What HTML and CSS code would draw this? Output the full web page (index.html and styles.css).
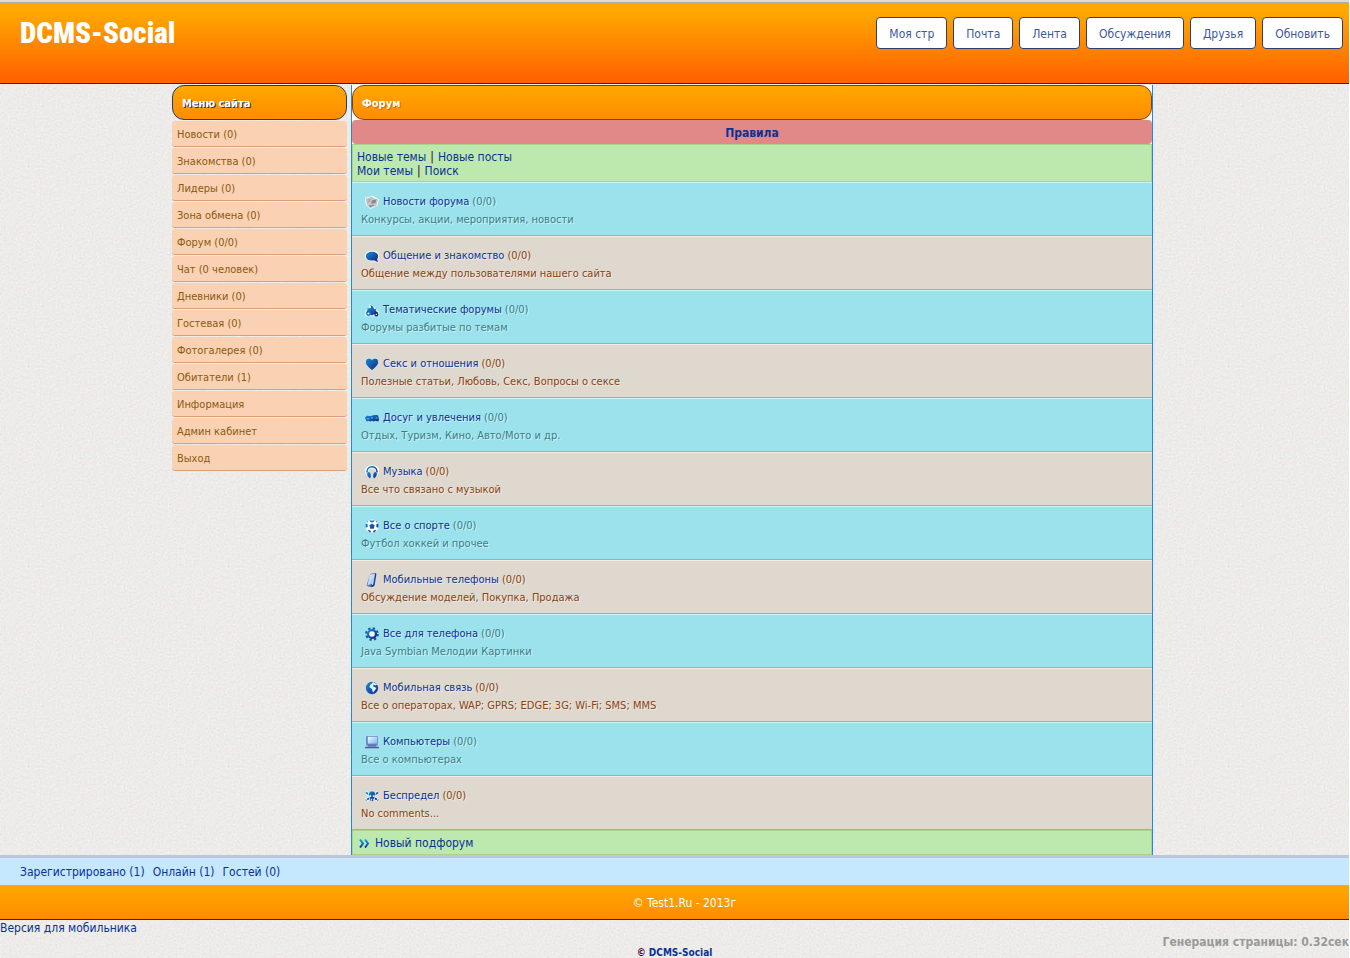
FILE: index.html
```html
<!DOCTYPE html>
<html lang="ru">
<head>
<meta charset="utf-8">
<title>DCMS-Social - Форум</title>
<link rel="stylesheet" href="styles.css">
</head>
<body>
<svg class="defs" width="0" height="0" aria-hidden="true">
  <defs>
    <linearGradient id="blue" x1="0" y1="0" x2="1" y2="1"><stop offset="0" stop-color="#1290dc"/><stop offset="1" stop-color="#16217c"/></linearGradient>
    <linearGradient id="glass" x1="0" y1="0" x2="1" y2="1"><stop offset="0" stop-color="#f2faff"/><stop offset="1" stop-color="#7db4e4"/></linearGradient>
    <linearGradient id="arrow" x1="0" y1="0" x2="0" y2="1"><stop offset="0" stop-color="#12a0e8"/><stop offset="1" stop-color="#1238a0"/></linearGradient>
  </defs>
</svg>
<header class="top">
  <a class="logo" href="#">DCMS-Social</a>
  <nav class="top-nav">
    <a href="#">Моя стр</a>
    <a href="#">Почта</a>
    <a href="#">Лента</a>
    <a href="#">Обсуждения</a>
    <a href="#">Друзья</a>
    <a href="#">Обновить</a>
  </nav>
</header>
<div class="page">
  <aside class="side">
    <h2 class="title title-side">Меню сайта</h2>
    <nav class="menu">
      <a href="#">Новости (0)</a>
      <a href="#">Знакомства (0)</a>
      <a href="#">Лидеры (0)</a>
      <a href="#">Зона обмена (0)</a>
      <a href="#">Форум (0/0)</a>
      <a href="#">Чат (0 человек)</a>
      <a href="#">Дневники (0)</a>
      <a href="#">Гостевая (0)</a>
      <a href="#">Фотогалерея (0)</a>
      <a href="#">Обитатели (1)</a>
      <a href="#">Информация</a>
      <a href="#">Админ кабинет</a>
      <a href="#">Выход</a>
    </nav>
  </aside>
  <main class="content">
    <h1 class="title title-main">Форум</h1>
    <div class="rules"><a href="#">Правила</a></div>
    <div class="foot">
      <div class="links"><a href="#">Новые темы</a> | <a href="#">Новые посты</a></div>
      <div class="links"><a href="#">Мои темы</a> | <a href="#">Поиск</a></div>
    </div>
    <div class="forums">
      <section class="forum">
        <div class="name"><svg class="icon" viewBox="0 0 16 16"><path fill="#fff" d="M0 3 9 1l7 4-2 7-8 4-5-5z"/><path fill="#c3c5c8" d="M1 4 8 2l3 2 4 1-2 7-7 3-4-4z"/><path fill="#85888c" d="m8 6 5-1-1 4-5 1zM4 12l8-1-6 3z"/><path stroke="#999" d="m3 6 3-1M3 8l3-1"/></svg><a href="#">Новости форума</a> <span>(0/0)</span></div>
        <p>Конкурсы, акции, мероприятия, новости</p>
      </section>
      <section class="forum">
        <div class="name"><svg class="icon" viewBox="0 0 16 16"><path fill="#fff" d="M8 2c5 0 8 2 8 6 0 2 0 3-1 4l1 4-5-2C4 15 0 12 0 8c0-4 4-6 8-6z"/><path fill="url(#blue)" d="M8 3c4 0 7 2 7 5 0 2-1 3-1 4l1 3-4-2c-6 1-10-1-10-5 0-3 3-5 7-5z"/></svg><a href="#">Общение и знакомство</a> <span>(0/0)</span></div>
        <p>Общение между пользователями нашего сайта</p>
      </section>
      <section class="forum">
        <div class="name"><svg class="icon" viewBox="0 0 16 16"><path fill="#d8f4fc" d="m5 1 4 2 3 3 4 4v5H0V9l4-3z"/><path fill="url(#blue)" d="m6 2 3 2 2 4 2-2-1 3 3 2-2 1-3-1-3 2-4-1-1-3 3-1 2-3z"/><path fill="url(#blue)" d="m3 6 7 0 4 5-6 3-6-2z"/><circle cx="4" cy="12" r="2" fill="#eaf7ff" stroke="#2166ac" stroke-width="1.5"/><circle cx="13" cy="13" r="1.6" fill="#eaf7ff" stroke="#1b2d80" stroke-width="1.5"/></svg><a href="#">Тематические форумы</a> <span>(0/0)</span></div>
        <p>Форумы разбитые по темам</p>
      </section>
      <section class="forum">
        <div class="name"><svg class="icon" viewBox="0 0 16 16"><path fill="url(#blue)" stroke="#f2fbff" stroke-width=".8" d="M8 15.500C4 12 .5 9 .5 6c0-5 5-6 7.500-3 2.500-3 7.500-2 7.500 3 0 3-3.500 6-7.500 9.500z"/></svg><a href="#">Секс и отношения</a> <span>(0/0)</span></div>
        <p>Полезные статьи, Любовь, Секс, Вопросы о сексе</p>
      </section>
      <section class="forum">
        <div class="name"><svg class="icon" viewBox="0 0 16 16"><path fill="url(#blue)" d="M0 8c1-3 4-3 6-2 2-1 6-2 9-1l1 5-1 2-3-1-2 1-2-1-2 1-2-1-2 1-1-2z"/><path fill="none" stroke="#8cd1f2" d="M2 9h3M7 8h2m3 0h2"/></svg><a href="#">Досуг и увлечения</a> <span>(0/0)</span></div>
        <p>Отдых, Туризм, Кино, Авто/Мото и др.</p>
      </section>
      <section class="forum">
        <div class="name"><svg class="icon" viewBox="0 0 16 16"><path fill="none" stroke="#fff" stroke-width="4" d="M3 10C0 5 4 2 8 2s8 3 5 8"/><path fill="none" stroke="url(#blue)" stroke-width="1.600" d="M3 10C1 5 4 2 8 2s7 3 5 8"/><path fill="url(#blue)" stroke="#f5fbff" stroke-width=".6" d="M3 8c2-1 4 1 4 4s-1 4-2 3c-2-1-4-5-2-7zM13 8c-2-1-4 1-4 4s1 4 2 3c2-1 4-5 2-7z"/></svg><a href="#">Музыка</a> <span>(0/0)</span></div>
        <p>Все что связано с музыкой</p>
      </section>
      <section class="forum">
        <div class="name"><svg class="icon" viewBox="0 0 16 16"><circle cx="8" cy="8" r="7.500" fill="#fff"/><path fill="url(#blue)" d="m8 5 3 2-1 4H6L5 7zM5 1l3 1 3-1-1 2-2 1-2-1zM1 5l2 1v3L1 10l-.5-3zM15 5l-2 1v3l2 1 .5-3zM3 12l3 1 1 2H5zM13 12l-3 1-1 2h2zM2 3l2-1-1 2zM14 3l-2-1 1 2z"/></svg><a href="#">Все о спорте</a> <span>(0/0)</span></div>
        <p>Футбол хоккей и прочее</p>
      </section>
      <section class="forum">
        <div class="name"><svg class="icon" viewBox="0 0 16 16"><path fill="#203a8c" d="m6 1 6-1 1 1-2 13-2 2-6-1-1-1z"/><path fill="url(#glass)" stroke="#fff" stroke-width=".6" d="m6 2 5-1-2 12-5 1H3z"/><path stroke="#356bb7" d="m4 14 4-1"/></svg><a href="#">Мобильные телефоны</a> <span>(0/0)</span></div>
        <p>Обсуждение моделей, Покупка, Продажа</p>
      </section>
      <section class="forum">
        <div class="name"><svg class="icon" viewBox="0 0 16 16"><circle cx="8" cy="8" r="6.500" fill="none" stroke="#16559f" stroke-width="2.600" stroke-dasharray="2.600 2.500"/><circle cx="8" cy="8" r="4.500" fill="#f5fcff" stroke="url(#blue)" stroke-width="2.600"/></svg><a href="#">Все для телефона</a> <span>(0/0)</span></div>
        <p>Java Symbian Мелодии Картинки</p>
      </section>
      <section class="forum">
        <div class="name"><svg class="icon" viewBox="0 0 16 16"><circle cx="8" cy="8" r="7.400" fill="url(#blue)" stroke="#eaf4fc" stroke-width=".6"/><path fill="#e4f5fd" d="m9 1 5 3-2 1-2-1-1 2 4 2-2 3-2 2-1-4-3-2 1-3 2-1z"/></svg><a href="#">Мобильная связь</a> <span>(0/0)</span></div>
        <p>Все о операторах, WAP; GPRS; EDGE; 3G; Wi-Fi; SMS; MMS</p>
      </section>
      <section class="forum">
        <div class="name"><svg class="icon" viewBox="0 0 16 16"><path fill="#426fbd" stroke="#e8f5ff" stroke-width=".6" d="M1 1h14v11H1z"/><path fill="url(#glass)" d="M3 2h11v8H3z"/><path fill="#a9b6dd" d="m1 11-1 4h16l-1-4z"/><path stroke="#495c9c" stroke-width="1.300" d="M0 14.500h16M3 12.500h10"/></svg><a href="#">Компьютеры</a> <span>(0/0)</span></div>
        <p>Все о компьютерах</p>
      </section>
      <section class="forum">
        <div class="name"><svg class="icon" viewBox="0 0 16 16"><path stroke="#e9f6ff" stroke-width="4" d="m1 4 14 9M15 4 1 13"/><path stroke="url(#blue)" stroke-width="2" stroke-dasharray="3 1" d="m1 4 14 9M15 4 1 13"/><path fill="url(#blue)" stroke="#e9f6ff" stroke-width=".7" d="M4 6c0-5 8-5 8 0l-1 4-1 4H6l-1-4z"/><path fill="#e9f6ff" d="M5 7h2v2H5zm4 0h2v2H9zm-2 4h1v2H7zm2 0h1v2H9z"/></svg><a href="#">Беспредел</a> <span>(0/0)</span></div>
        <p>No comments...</p>
      </section>
    </div>
    <div class="foot foot-new">
      <svg class="arrows" viewBox="0 0 11 9"><path fill="none" stroke="url(#arrow)" stroke-width="2" d="M1 .5 4 4.500 1 8.500M6 .5l3 4-3 4"/></svg>
      <a href="#">Новый подфорум</a>
    </div>
  </main>
</div>
<div class="stats"><a href="#">Зарегистрировано (1)</a> <a href="#">Онлайн (1)</a> <a href="#">Гостей (0)</a></div>
<footer class="copy">© Test1.Ru - 2013г</footer>
<div class="bottom">
  <a class="mobile" href="#">Версия для мобильника</a>
  <div class="engine">© <a href="#">DCMS-Social</a></div>
  <div class="timing">Генерация страницы: 0.32сек</div>
</div>
</body>
</html>
```
FILE: styles.css
```css
* { box-sizing: border-box; }
body {
  margin: 0;
  border-right: 1px solid #fff;
  font: 12px/14px Tahoma, "DejaVu Sans Condensed", "Noto Sans", sans-serif;
  color: #300030;
  background: #edebe9 url("data:image/svg+xml,%3Csvg xmlns='http://www.w3.org/2000/svg' width='200' height='200'%3E%3Cfilter id='n' x='0' y='0' width='1' height='1' color-interpolation-filters='sRGB'%3E%3CfeTurbulence type='fractalNoise' baseFrequency='.5' numOctaves='2' stitchTiles='stitch'/%3E%3CfeColorMatrix values='.12 0 0 0 .87 0 .12 0 0 .863 0 0 .12 0 .855 0 0 0 0 1'/%3E%3C/filter%3E%3Crect width='200' height='200' filter='url(%23n)'/%3E%3C/svg%3E");
}
a { color: #0a3294; text-decoration: none; }
p, h1, h2 { margin: 0; }
.defs { position: absolute; }
.top {
  display: flex;
  justify-content: space-between;
  align-items: flex-start;
  height: 84px;
  padding: 17px 6px 0 20px;
  border-bottom: 1px solid #2a2a3a;
  background: linear-gradient(#dcdcdc 2px, #aaa 2px, #aaa 3px, #ffa800 3px, #ffa800 12px, #ff6400 78px);
}
.logo {
  color: #fff;
  font: 900 29px/32px Impact, "Liberation Sans Narrow", "Roboto Condensed", "DejaVu Sans Condensed", sans-serif;
}
.top-nav { display: flex; gap: 6px; }
.top-nav a {
  padding: 9px 12px 7px;
  border: 1px solid #2b4070;
  border-radius: 4px;
  background: #fff;
  color: #3b5998;
}
.page {
  display: flex;
  gap: 4px;
  align-items: flex-start;
  max-width: 1005px;
  margin: 0 auto;
  padding: 1px 24px 0 0;
}
.side { flex: 0 0 175px; }
.title {
  height: 35px;
  padding: 0 9px;
  border: 1px solid #1d3b78;
  border-radius: 12px;
  background: linear-gradient(#ffa800, #ff8c00);
  color: #fff;
  font-size: 11px;
  line-height: 35px;
  text-shadow: 1px 1px 0 #1d3b78;
}
.title-main { border-color: #8a3a10; text-shadow: 1px 1px 0 #d86a00; }
.menu { display: grid; gap: 1px; padding-top: 1px; }
.menu a {
  height: 26px;
  padding: 0 5px;
  border-bottom: 1px solid #d8a17c;
  border-radius: 3px;
  background: #fbd1b3;
  color: #8a5a10;
  font-size: 11px;
  line-height: 27px;
}
.content { flex: 1; border: solid #1e88f0; border-width: 0 1px; background: #fff; }
.rules {
  padding: 6px 5px 4px;
  border-radius: 4px;
  background: #e18888;
  font-weight: bold;
  text-align: center;
}
.foot {
  padding: 5px 4px 3px;
  border: 1px solid #a5d68c;
  background: #bde9ae;
}
.links { display: flex; gap: 4px; }
.forum {
  padding: 10px 9px 6px;
  border-top: 1px solid #c8f4fa;
  border-bottom: 1px solid #70bfcb;
  background: #9ce2ec;
  color: #3a7f88;
  font-size: 11px;
  line-height: 18px;
  text-shadow: 1px 1px 0 rgba(255, 255, 255, .5);
}
.forum:nth-child(even) {
  border-top-color: #f4ece4;
  border-bottom-color: #cda080;
  background: #dfd8ce;
  color: #8a4210;
}
.name { display: flex; gap: 3px; align-items: center; }
.icon { width: 14px; height: 14px; margin: 0 1px 0 4px; }
.foot-new { display: flex; gap: 5px; align-items: center; padding: 5px 6px 4px; }
.arrows { width: 11px; height: 9px; }
.stats { display: flex; gap: 8px; padding: 7px 20px 6px; border-top: 3px solid #bcc6dc; background: #c6e8ff; }
.copy {
  padding: 11px 0 9px 20px;
  border-bottom: 1px solid #2a2a3a;
  background: linear-gradient(#ffa800, #ff8c00);
  color: #fff;
  text-align: center;
}
.bottom { display: grid; grid-template-columns: 1fr auto 1fr; }
.mobile { padding-top: 1px; }
.engine { padding-top: 27px; font-size: 10px; font-weight: bold; line-height: 12px; white-space: nowrap; }
.timing { padding-top: 15px; color: #999; font-weight: bold; text-align: right; }
```
